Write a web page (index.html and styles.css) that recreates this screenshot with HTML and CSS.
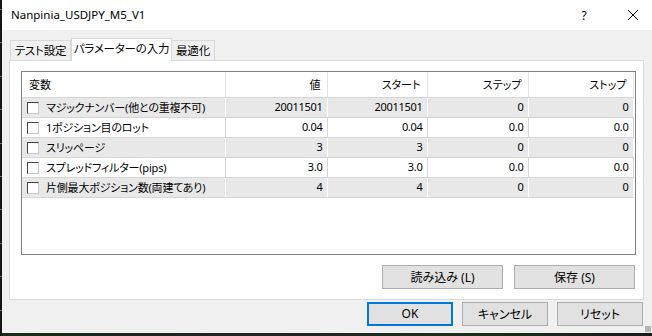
FILE: index.html
```html
<!DOCTYPE html>
<html lang="ja">

<head>
    <meta charset="UTF-8">
    <title>Nanpinia_USDJPY_M5_V1</title>
    <link rel="stylesheet" href="styles.css">
</head>

<body>
    <div class="window">
        <div class="edge"></div>
        <div class="frame">
            <div class="titlebar">
                <span class="title">Nanpinia_USDJPY_M5_V1</span>
                <span class="help">?</span>
                <span class="close">
                    <svg width="12" height="12" viewBox="0 0 12 12">
                        <path d="M1 1 L11 11 M11 1 L1 11" stroke="#000" stroke-width="1" fill="none" />
                    </svg>
                </span>
            </div>
            <div class="content">
                <div class="tabs">
                    <div class="tab">テスト設定</div>
                    <div class="tab active">パラメーターの入力</div>
                    <div class="tab">最適化</div>
                </div>
                <div class="panel">
                    <div class="listview">
                        <table>
                            <colgroup>
                                <col class="c-name">
                                <col class="c-value">
                                <col class="c-start">
                                <col class="c-step">
                                <col class="c-stop">
                            </colgroup>
                            <thead>
                                <tr>
                                    <th class="name">変数</th>
                                    <th>値</th>
                                    <th>スタート</th>
                                    <th>ステップ</th>
                                    <th>ストップ</th>
                                </tr>
                            </thead>
                            <tbody>
                                <tr class="odd">
                                    <td class="name"><span class="check"></span>マジックナンバー(他との重複不可)</td>
                                    <td>20011501</td>
                                    <td>20011501</td>
                                    <td>0</td>
                                    <td>0</td>
                                </tr>
                                <tr>
                                    <td class="name"><span class="check"></span>1ポジション目のロット</td>
                                    <td>0.04</td>
                                    <td>0.04</td>
                                    <td>0.0</td>
                                    <td>0.0</td>
                                </tr>
                                <tr class="odd">
                                    <td class="name"><span class="check"></span>スリッページ</td>
                                    <td>3</td>
                                    <td>3</td>
                                    <td>0</td>
                                    <td>0</td>
                                </tr>
                                <tr>
                                    <td class="name"><span class="check"></span>スプレッドフィルター(pips)</td>
                                    <td>3.0</td>
                                    <td>3.0</td>
                                    <td>0.0</td>
                                    <td>0.0</td>
                                </tr>
                                <tr class="odd">
                                    <td class="name"><span class="check"></span>片側最大ポジション数(両建てあり)</td>
                                    <td>4</td>
                                    <td>4</td>
                                    <td>0</td>
                                    <td>0</td>
                                </tr>
                            </tbody>
                        </table>
                    </div>
                    <div class="panel-buttons">
                        <button class="btn wide">読み込み (L)</button>
                        <button class="btn wide">保存 (S)</button>
                    </div>
                </div>
                <div class="dialog-buttons">
                    <button class="btn default">OK</button>
                    <button class="btn">キャンセル</button>
                    <button class="btn">リセット</button>
                </div>
                <div class="grip"></div>
            </div>
            <div class="chart-strip"></div>
        </div>
    </div>
</body>

</html>
```

FILE: styles.css
```css
* {
    box-sizing: border-box;
}

body {
    margin: 0;
    font-family: "Noto Sans", "Noto Sans CJK JP", sans-serif;
    font-size: 11px;
    font-feature-settings: "palt";
    color: #000;
    background: #111;
}

.window {
    display: flex;
    width: 652px;
    height: 336px;
}

.edge {
    width: 2px;
    background: repeating-linear-gradient(to bottom, #151515 0, #151515 9px, #777 9px, #777 10px, #151515 10px, #151515 33.4px);
}

.frame {
    flex: 1;
    display: flex;
    flex-direction: column;
}

.titlebar {
    height: 30px;
    background: #fff;
    display: flex;
    align-items: center;
    padding-left: 9px;
}

.title {
    flex: 1;
    font-size: 11.5px;
    padding-bottom: 1px;
}

.help {
    width: 14px;
    text-align: center;
    font-size: 12px;
    margin-right: 36px;
}

.close {
    display: flex;
    margin-right: 13px;
}

.content {
    position: relative;
    flex: 1;
    background: #f0f0f0;
    padding: 8px 8px 0 7px;
    display: flex;
    flex-direction: column;
}

.tabs {
    display: flex;
    align-items: flex-end;
    height: 22px;
    margin-left: 1px;
    position: relative;
    z-index: 1;
}

.tab {
    height: 20px;
    line-height: 19px;
    padding: 0;
    text-align: center;
    white-space: nowrap;
    border: 1px solid #d9d9d9;
    border-bottom: none;
    background: #f0f0f0;
    font-size: 11.5px;
    letter-spacing: -0.2px;
}

.tab + .tab {
    border-left: none;
}

.tab:first-child {
    width: 61px;
}

.tab.active {
    width: 101px;
    height: 23px;
    margin-bottom: -1px;
    background: #fff;
    border-left: 1px solid #d9d9d9;
    line-height: 20px;
}

.tab.active + .tab {
    border-left: none;
    width: 43px;
}

.panel {
    width: 635px;
    height: 240px;
    background: #fff;
    border: 1px solid #d9d9d9;
    padding: 10px 7px 0 11px;
    display: flex;
    flex-direction: column;
}

.listview {
    width: 615px;
    height: 184px;
    border: 1px solid #828282;
    background: #fff;
}

.listview table {
    width: 611px;
    border-collapse: collapse;
    table-layout: fixed;
}

.c-name {
    width: 203px;
}

.c-value {
    width: 102px;
}

.c-start {
    width: 100px;
}

.c-step {
    width: 101px;
}

.c-stop {
    width: 105px;
}

.listview th {
    height: 25px;
    font-weight: normal;
    text-align: right;
    padding: 0 6px 1px 0;
    border-right: 1px solid #e5e5e5;
    border-bottom: 1px solid #d5d5d5;
    white-space: nowrap;
}

.listview th.name {
    text-align: left;
    padding-left: 7px;
}

.listview td {
    height: 20px;
    text-align: right;
    padding: 0 4px 1px 0;
    border-right: 1px solid #d5d5d5;
    border-bottom: 1px solid #d5d5d5;
    white-space: nowrap;
    letter-spacing: -0.3px;
}

.listview tr.odd td {
    background: #e8e8e8;
    border-right-color: #fff;
}

.listview td.name {
    text-align: left;
    padding-left: 5px;
    letter-spacing: -0.2px;
}

.check {
    display: inline-block;
    width: 12px;
    height: 12px;
    background: #fff;
    border: 1px solid;
    border-color: #444 #c8c8c8 #c8c8c8 #444;
    vertical-align: -2px;
    margin-right: 7px;
}

.panel-buttons {
    display: flex;
    justify-content: flex-end;
    gap: 11px;
    margin-top: 10px;
    padding-right: 1px;
}

.btn {
    font-family: inherit;
    font-size: 12px;
    font-feature-settings: "palt";
    width: 86px;
    height: 24px;
    padding: 0 0 1px;
    background: #e1e1e1;
    border: 1px solid #adadad;
    color: #000;
}

.btn.wide {
    width: 121px;
}

.btn.default {
    border: 2px solid #0078d7;
}

.dialog-buttons {
    display: flex;
    justify-content: flex-end;
    gap: 9px;
    margin-top: 2px;
    margin-right: 1px;
}

.grip {
    position: absolute;
    right: 1px;
    bottom: 1px;
    width: 6px;
    height: 6px;
    background: radial-gradient(circle, #b5b5b5 0.8px, transparent 1px) 0 0 / 2px 2px;
}

.chart-strip {
    height: 3px;
    background: linear-gradient(to right, #1c2a1c 0, #222 40%, #1d2e1d 70%, #1a1a1a 100%);
}
```
